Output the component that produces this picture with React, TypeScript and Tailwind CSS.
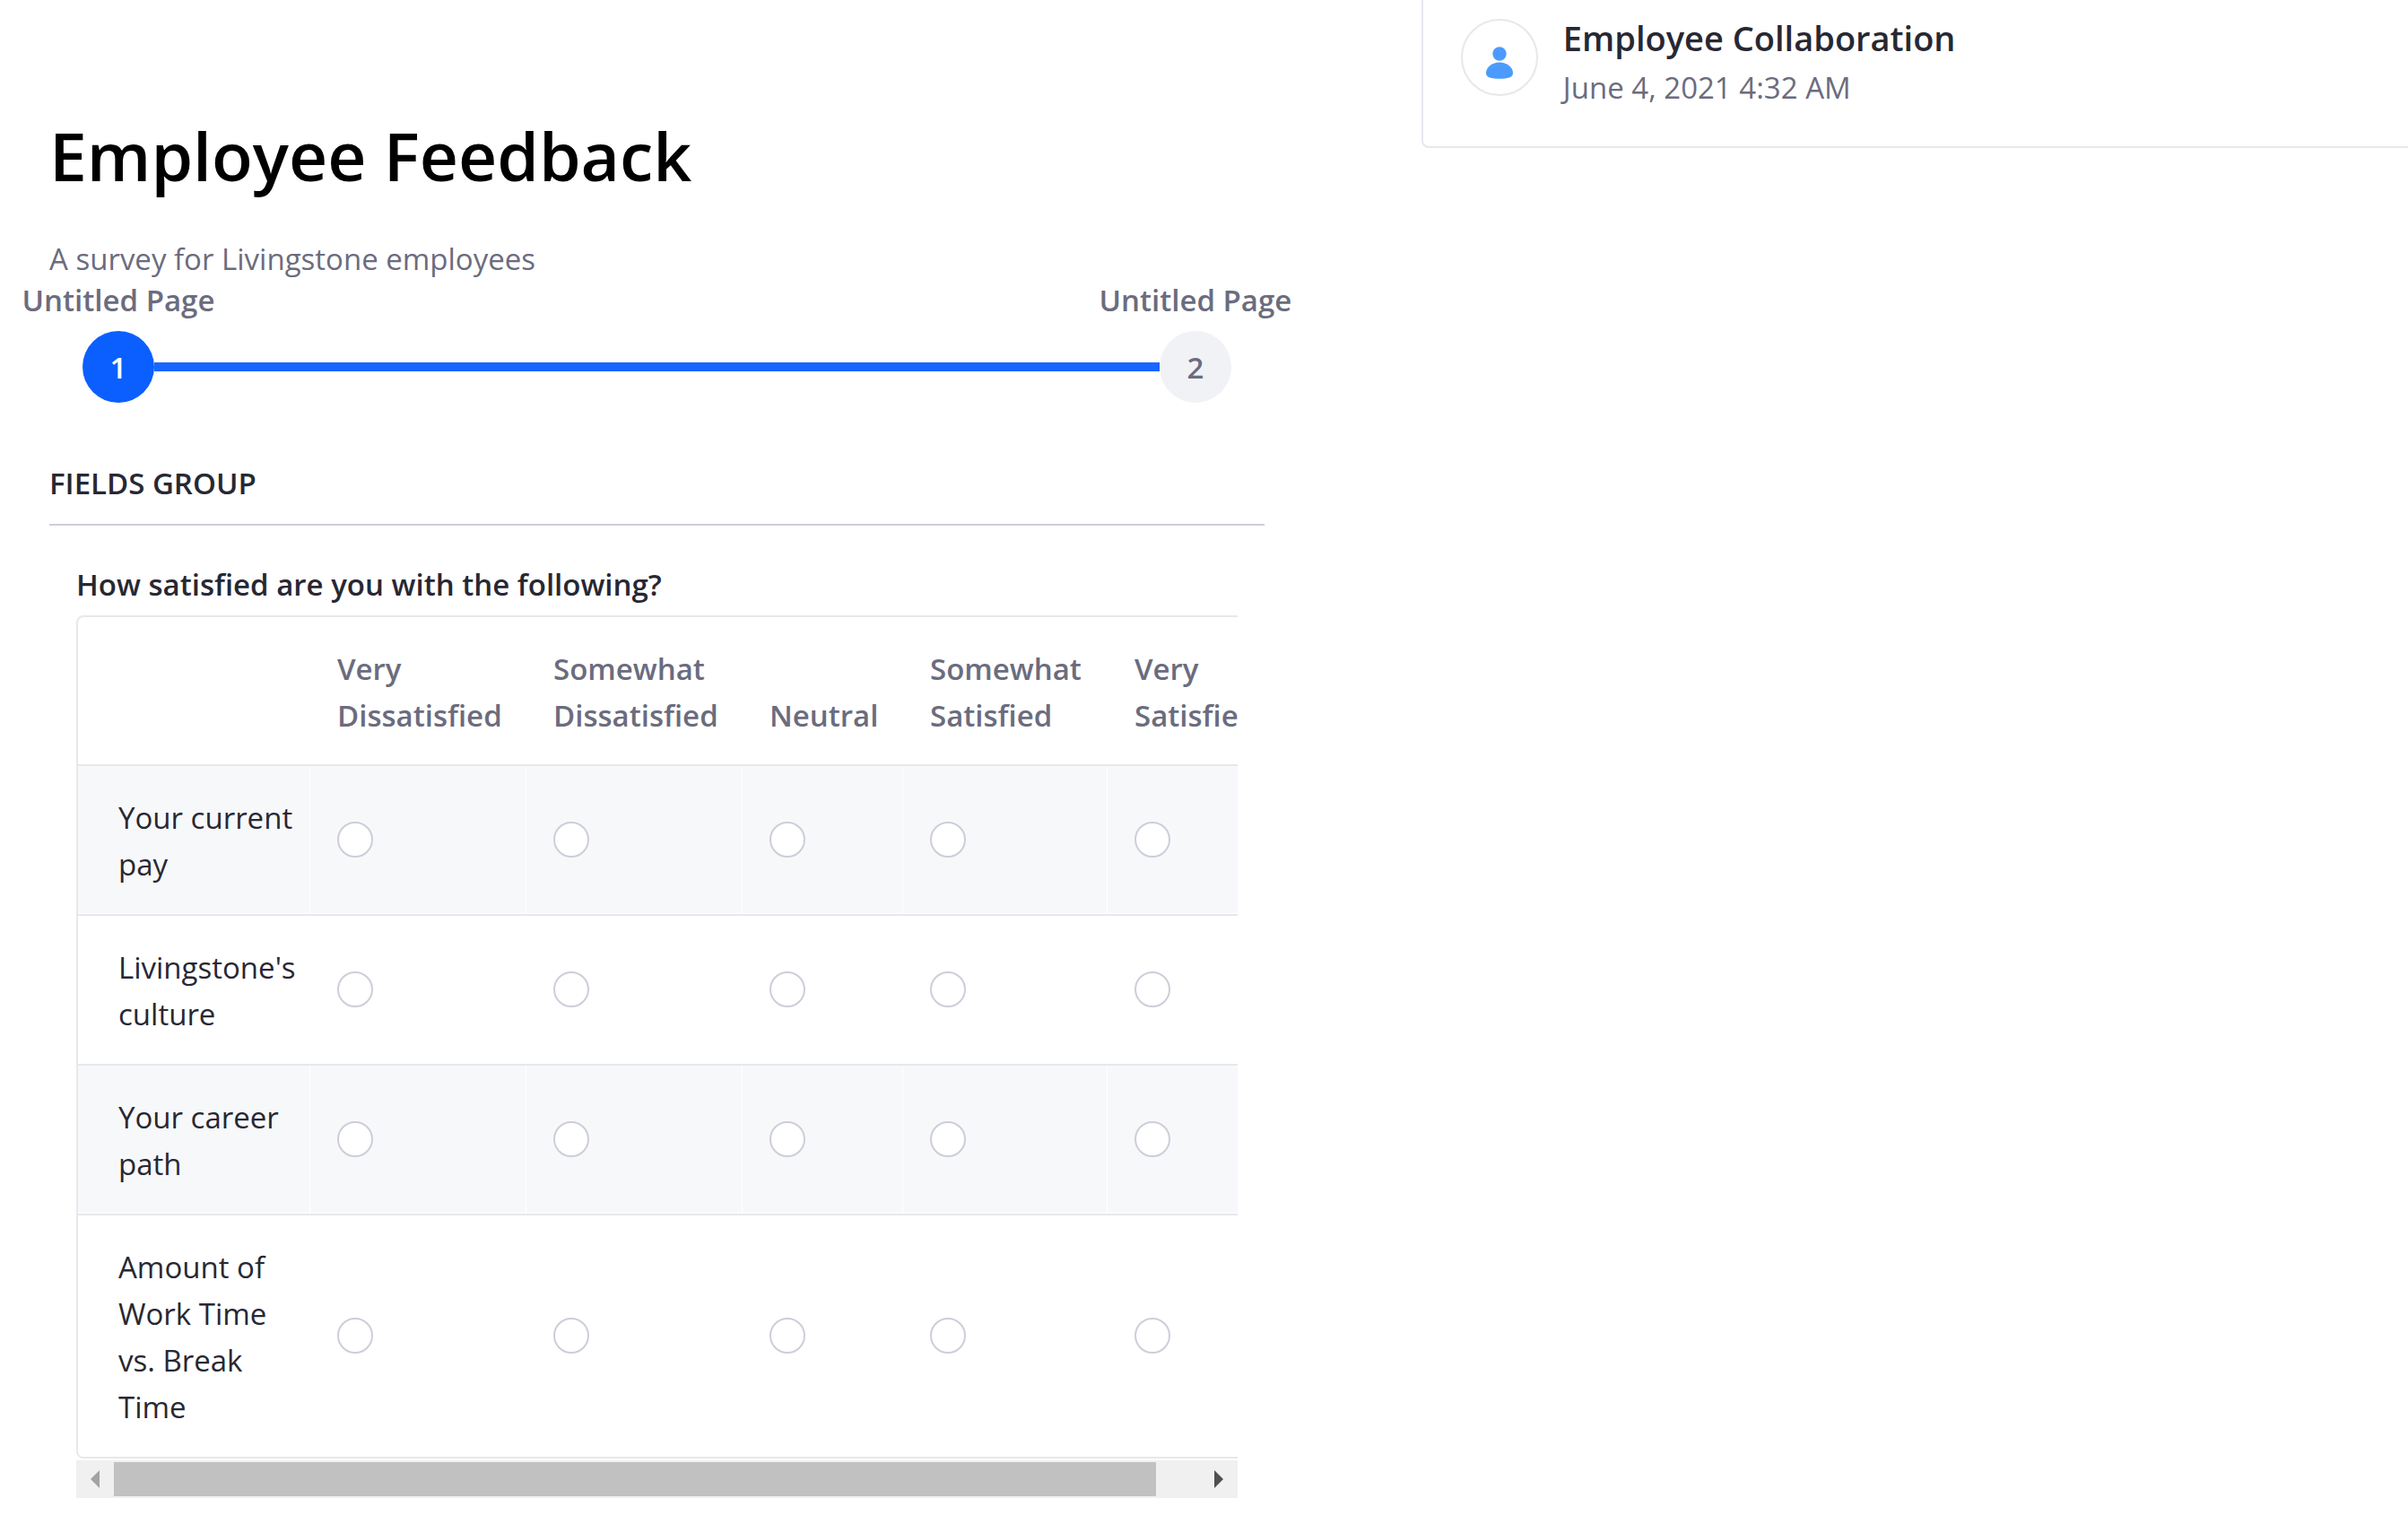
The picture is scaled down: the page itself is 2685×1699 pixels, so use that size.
import { Fragment, useRef, useState } from "react";

const pages = ["Untitled Page", "Untitled Page"];

const options = [
  { label: "Very Dissatisfied", width: "w-[241px]" },
  { label: "Somewhat Dissatisfied", width: "w-[241px]" },
  { label: "Neutral", width: "w-[179px]" },
  { label: "Somewhat Satisfied", width: "w-[228px]" },
  { label: "Very Satisfied", width: "w-[196px]" },
];

const questions = [
  "Your current pay",
  "Livingstone's culture",
  "Your career path",
  "Amount of Work Time vs. Break Time",
];

function Stepper() {
  return (
    <ol className="-mx-[30px] flex items-end">
      {pages.map((name, i) => (
        <Fragment key={i}>
          {i > 0 && (
            <li aria-hidden="true" className="-mx-[67px] mb-[35px] h-[10px] flex-1 bg-[#1866ff]" />
          )}
          <li className="flex w-[214px] flex-col items-center gap-[11px] font-semibold text-[#6b6c7e]">
            <span className="whitespace-nowrap">{name}</span>
            <button
              type="button"
              className={
                i === 0
                  ? "flex size-20 items-center justify-center rounded-full bg-[#0b5fff] pt-0.5 text-white"
                  : "flex size-20 items-center justify-center rounded-full bg-[#f1f2f5] pt-0.5 text-[#6b6c7e]"
              }
            >
              {i + 1}
            </button>
          </li>
        </Fragment>
      ))}
    </ol>
  );
}

function SatisfactionGrid() {
  const [answers, setAnswers] = useState<Record<number, number>>({});
  return (
    <div className="w-[1348px] overflow-hidden rounded-lg border-2 border-[#e7e7ed]">
      <table className="w-full table-fixed border-separate border-spacing-0 text-left leading-[52px]">
        <thead>
          <tr className="align-bottom text-[#6b6c7e]">
            <td className="w-[259px]" />
            {options.map((o) => (
              <th
                key={o.label}
                scope="col"
                className={`${o.width} pt-[32px] pb-[28px] pl-[30px] font-semibold`}
              >
                {o.label}
              </th>
            ))}
          </tr>
        </thead>
        <tbody>
          {questions.map((q, r) => (
            <tr key={q} className={r % 2 === 0 ? "bg-[#f7f8fa]" : "bg-white"}>
              <th
                scope="row"
                className="border-t-2 border-[#e7e7ed] pt-[32px] pr-4 pb-[29px] pl-[45px] font-normal shadow-[inset_-1px_-1px_0_#ffffff]"
              >
                {q}
              </th>
              {options.map((o, c) => (
                <td
                  key={o.label}
                  className="border-t-2 border-[#e7e7ed] pt-[30px] pb-[31px] pl-[30px] align-middle shadow-[inset_-1px_-1px_0_#ffffff]"
                >
                  <input
                    type="radio"
                    name={`question-${r}`}
                    aria-label={`${q}: ${o.label}`}
                    checked={answers[r] === c}
                    onChange={() => setAnswers({ ...answers, [r]: c })}
                    className="block size-10 appearance-none rounded-full border-2 border-[#cdced9] bg-white checked:border-[12px] checked:border-[#0b5fff]"
                  />
                </td>
              ))}
            </tr>
          ))}
        </tbody>
      </table>
    </div>
  );
}

function ScrollArea() {
  const view = useRef<HTMLDivElement>(null);
  const [offset, setOffset] = useState(0);
  const scroll = (dx: number) => {
    const el = view.current;
    if (!el) return;
    el.scrollLeft += dx;
    setOffset((el.scrollLeft / el.scrollWidth) * 100);
  };
  return (
    <div>
      <div ref={view} className="overflow-x-hidden">
        <SatisfactionGrid />
      </div>
      <div className="mt-[2px] flex h-[42px] bg-[#f0f0f0]">
        <button
          type="button"
          aria-label="Scroll left"
          onClick={() => scroll(-40)}
          className="flex w-[42px] items-center justify-center text-[#a3a3a3]"
        >
          <svg viewBox="0 0 10 20" className="h-5 w-[10px]" fill="currentColor">
            <path d="M10 0v20L0 10z" />
          </svg>
        </button>
        <div className="flex flex-1 items-center">
          <div className="h-[38px] w-[96%] bg-[#c1c1c1]" style={{ marginLeft: `${offset}%` }} />
        </div>
        <button
          type="button"
          aria-label="Scroll right"
          onClick={() => scroll(40)}
          className="flex w-[42px] items-center justify-center text-[#505050]"
        >
          <svg viewBox="0 0 10 20" className="h-5 w-[10px]" fill="currentColor">
            <path d="M0 0v20l10-10z" />
          </svg>
        </button>
      </div>
    </div>
  );
}

function ActivityCard() {
  return (
    <aside className="flex items-start gap-7 rounded-bl-lg border-b-2 border-l-2 border-[#e7e7ed] pb-[42px] pl-[42px]">
      <div className="mt-[21px] flex size-[86px] shrink-0 items-center justify-center rounded-full border-2 border-[#e7e7ed] pt-3">
        <svg viewBox="0 0 30 36" className="h-9 w-[30px]" fill="#4b9bff">
          <circle cx="15" cy="8" r="7.7" />
          <path d="M15 17.5C23 17.5 30 22.5 30 29.5c0 5-6 6.300-15 6.300S0 34.500 0 29.500c0-7 7-12 15-12z" />
        </svg>
      </div>
      <div className="flex flex-col gap-1.5 pt-[15px]">
        <h2 className="text-[38px] leading-[54px] font-semibold">Employee Collaboration</h2>
        <p className="text-[#6b6c7e]">June 4, 2021 4:32 AM</p>
      </div>
    </aside>
  );
}

export default function App() {
  return (
    <div className="grid grid-cols-[4fr_3fr] items-start gap-[118px] bg-white font-['Open_Sans','Noto_Sans',sans-serif] text-[33px] leading-[46px] text-[#272833]">
      <main className="min-w-0 pt-[125px] pr-[57px] pl-[55px]">
        <h1 className="text-[75px] leading-[96px] font-semibold text-black">Employee Feedback</h1>
        <p className="mt-[45px] text-[#6b6c7e]">A survey for Livingstone employees</p>
        <Stepper />
        <form className="mt-[67px]">
          <h2 className="border-b-2 border-[#cdced9] pb-[22px] font-semibold">FIELDS GROUP</h2>
          <div role="group" aria-labelledby="satisfaction-label" className="px-[30px] pt-[43px]">
            <p id="satisfaction-label" className="mb-[11px] font-semibold">
              How satisfied are you with the following?
            </p>
            <ScrollArea />
          </div>
        </form>
      </main>
      <ActivityCard />
    </div>
  );
}
